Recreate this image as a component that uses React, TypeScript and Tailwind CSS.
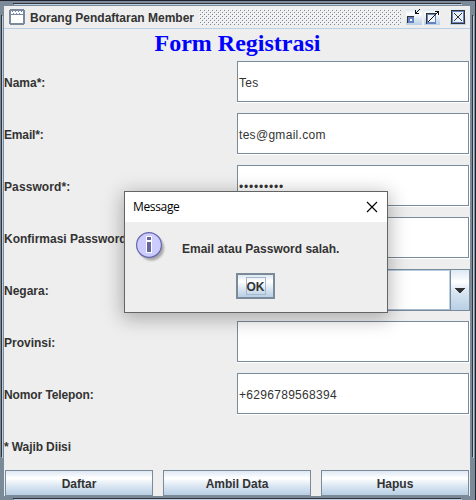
import React from "react";

const field =
  "h-[42px] w-[233px] flex items-center border-b border-r border-white bg-white";

function TextField({ value, className = "tracking-[0.3px]" }: { value?: string; className?: string }) {
  return (
    <div className={field}>
      <div className="flex h-full w-full items-center border border-[#7a8a99] bg-white pl-px pt-[2px]">
        <span className={`text-[12px] leading-[14px] ${className}`}>{value}</span>
      </div>
    </div>
  );
}

function Combo() {
  return (
    <div className="flex h-[42px] w-[233px] border border-[#7a8a99] bg-white">
      <div className="flex-1 border border-[#b8cfe5] border-b-[#a3b8cc]" />
      <div className="flex w-[19px] items-center justify-center border-l border-[#7a8a99] bg-[linear-gradient(#dde8f3,#fff_30%,#dde8f3_50%,#b8cfe5)]">
        <svg width="10" height="5" shapeRendering="crispEdges" fill="#333">
          <path d="M0 0h10v1h-1v1h-1v1h-1v1h-1v1h-2v-1h-1v-1h-1v-1h-1v-1h-1z" />
        </svg>
      </div>
    </div>
  );
}

function Row({ label, tracking = "", children }: { label: string; tracking?: string; children?: React.ReactNode }) {
  return (
    <div className="flex h-[42px] items-center">
      <div className={`w-[233px] whitespace-nowrap pt-[2px] text-[12px] font-bold leading-[14px] ${tracking}`}>{label}</div>
      {children}
    </div>
  );
}

function Button({ label }: { label: string }) {
  return (
    <button className="flex h-[26px] w-[148px] items-center justify-center border border-[#7a8a99] bg-[linear-gradient(#dde8f3,#fff_30%,#dde8f3_60%,#b8cfe5)] pt-[2px] text-[12px] font-bold leading-[14px]">
      {label}
    </button>
  );
}

function FrameEdges() {
  return (
    <svg className="absolute inset-0" width="476" height="500" shapeRendering="crispEdges">
      <path fill="#22232f" d="M0 0h476v1H0zM475 0h1v500h-1z" />
      <path fill="#333" d="M13 3h448v1H13zM13 498h448v1H13zM1 15h1v442H1zM472 15h1v442h-1z" />
      <path fill="#b8cfe5" d="M14 4h448v1H14zM14 499h448v1H14zM2 16h1v442H2zM473 16h1v442h-1z" />
    </svg>
  );
}

function TitleBar() {
  return (
    <div className="flex h-[23px] items-start border-b border-[#b8cfe5]">
      <svg className="ml-[5px] mt-[3px] shrink-0" width="16" height="16" shapeRendering="crispEdges">
        <path fill="#7a8a99" d="M1 0h14v1h1v14h-1v1H1v-1H0V1h1z" />
        <path fill="#fff" d="M2 2h12v3H2zM2 6h12v8H2z" />
        <path fill="#7682c5" d="M3 2h1v1H3zM6 2h1v1H6zM9 2h1v1H9zM12 2h1v1h-1zM4 4h1v1H4zM7 4h1v1H7zM10 4h1v1h-1z" />
      </svg>
      <span className="ml-[5px] mt-[5px] w-[169px] shrink-0 whitespace-nowrap text-[12px] font-bold leading-[14px]">
        Borang Pendaftaran Member
      </span>
      <svg className="mt-[3px] shrink-0" width="202" height="16" shapeRendering="crispEdges">
        <defs>
          <pattern id="bumps" width="4" height="4" patternUnits="userSpaceOnUse">
            <path fill="#7a8a99" d="M1 1h1v1H1zM3 3h1v1H3z" />
            <path fill="#fff" d="M0 0h1v1H0zM2 2h1v1H2z" />
          </pattern>
        </defs>
        <rect width="202" height="16" fill="url(#bumps)" />
      </svg>
      <svg className="ml-[5px] mt-[3px] shrink-0" width="60" height="16" shapeRendering="crispEdges">
        <defs>
          <linearGradient id="metal" x2="0" y2="1">
            <stop stopColor="#dde8f3" />
            <stop offset=".3" stopColor="#fff" />
            <stop offset=".6" stopColor="#dde8f3" />
            <stop offset="1" stopColor="#b8cfe5" />
          </linearGradient>
        </defs>
        <path fill="url(#metal)" d="M0 0h16v16H0zM18 0h16v16H18zM44 0h16v16H44z" />
        <path fill="#333" d="M1 7h7v7H1z" />
        <path fill="#6382bf" d="M2 8h6v6H2z" />
        <path fill="#fff" d="M4 10h2v2H4z" />
        <path fill="#111" d="M9 1h1v2h1V2h1V1h1V0h1v1h-1v1h-1v1h-1v1h2v1H9z" />
        <path fill="#333" d="M20 4h10v11H20z" />
        <path fill="#6382bf" d="M21 5h9v10h-9z" />
        <path fill="#eef4fa" d="M22 6h7v7h-7z" />
        <path fill="#111" d="M29 2h4v4h-1V4h-1v1h-1v1h-1v1h-1v1h-1v1h-1v1h-1v1h-1v1h-1v1h-1v-1h1v-1h1v-1h1V9h1V8h1V7h1V6h1V5h1V4h1V3h-2z" />
        <path fill="#333" d="M45 1h14v14H45z" />
        <path fill="#6382bf" d="M46 2h12v12H46z" />
        <path fill="#eaf1f8" d="M47 3h10v10H47z" />
        <path fill="none" stroke="#333" strokeWidth="1" shapeRendering="auto" d="m48 4 8 8m0-8-8 8" />
      </svg>
    </div>
  );
}

function Dialog() {
  return (
    <div className="absolute left-[124px] top-[191px] h-[122px] w-[264px] border border-[#646464] bg-[#eee] shadow-[0_4px_18px_2px_rgba(0,0,0,0.28)]">
      <div className="flex h-[30px] items-center justify-between bg-white pl-2 pr-[9px] text-black">
        <span className="font-['Open_Sans',sans-serif] text-[12px] leading-4 tracking-[-0.35px]">Message</span>
        <svg width="12" height="12" stroke="#000" strokeWidth="1.1">
          <path d="m1 1 10 10m0-10L1 11" />
        </svg>
      </div>
      <div className="flex h-[51px] pl-[11px] pt-[10px]">
        <svg width="32" height="32" className="shrink-0">
          <defs>
            <filter id="soft"><feGaussianBlur stdDeviation="1.2" /></filter>
          </defs>
          <circle cx="15.5" cy="16" r="12.5" fill="#777" opacity=".6" filter="url(#soft)" />
          <circle cx="13" cy="13" r="12.4" fill="#ccf" stroke="#66a" strokeWidth="1.2" />
          <path fill="#fff" d="M10 4h6v17h-6z" />
          <path fill="#669" d="M11 5h4v3h-4zM11 10h4v10h-4z" />
        </svg>
        <span className="ml-[14px] mt-[10px] whitespace-nowrap text-[12px] font-bold leading-[14px]">Email atau Password salah.</span>
      </div>
      <button className="ml-[111px] flex h-[26px] w-[39px] items-center justify-center border-2 border-[#7a8a99] bg-[linear-gradient(#dde8f3,#fff_30%,#dde8f3_60%,#b8cfe5)]">
        <span className="flex h-[18px] w-[20px] items-center justify-center border border-[#a3b8cc] pt-px text-[12px] font-bold leading-[14px]">OK</span>
      </button>
    </div>
  );
}

export default function App() {
  return (
    <div className="relative h-[500px] w-[476px] overflow-hidden bg-[#7a8a99] pl-1 pt-[6px] font-['Liberation_Sans',Arial,sans-serif] text-[#333]">
      <FrameEdges />
      <div className="relative flex h-[490px] w-[466px] flex-col bg-[#eee]">
        <TitleBar />
        <h1 className="h-[32px] whitespace-nowrap pl-px text-center font-['Liberation_Serif',serif] text-[24px] font-bold leading-[28px] text-[#00f]">Form Registrasi</h1>
        <div className="flex flex-col gap-[10px]">
          <Row label="Nama*:"><TextField value="Tes" /></Row>
          <Row label="Email*:" tracking="tracking-[-0.15px]"><TextField value="tes@gmail.com" /></Row>
          <Row label="Password*:" tracking="tracking-[0.1px]"><TextField value="•••••••••" className="pt-px tracking-[0.8px]" /></Row>
          <Row label="Konfirmasi Password*:"><TextField /></Row>
          <Row label="Negara:"><Combo /></Row>
          <Row label="Provinsi:"><TextField /></Row>
          <Row label="Nomor Telepon:" tracking="tracking-[-0.1px]"><TextField value="+6296789568394" /></Row>
          <Row label="* Wajib Diisi" tracking="tracking-[-0.1px]" />
        </div>
        <div className="mt-[3px] flex gap-[10px] pl-px">
          <Button label="Daftar" />
          <Button label="Ambil Data" />
          <Button label="Hapus" />
        </div>
      </div>
      <Dialog />
    </div>
  );
}
